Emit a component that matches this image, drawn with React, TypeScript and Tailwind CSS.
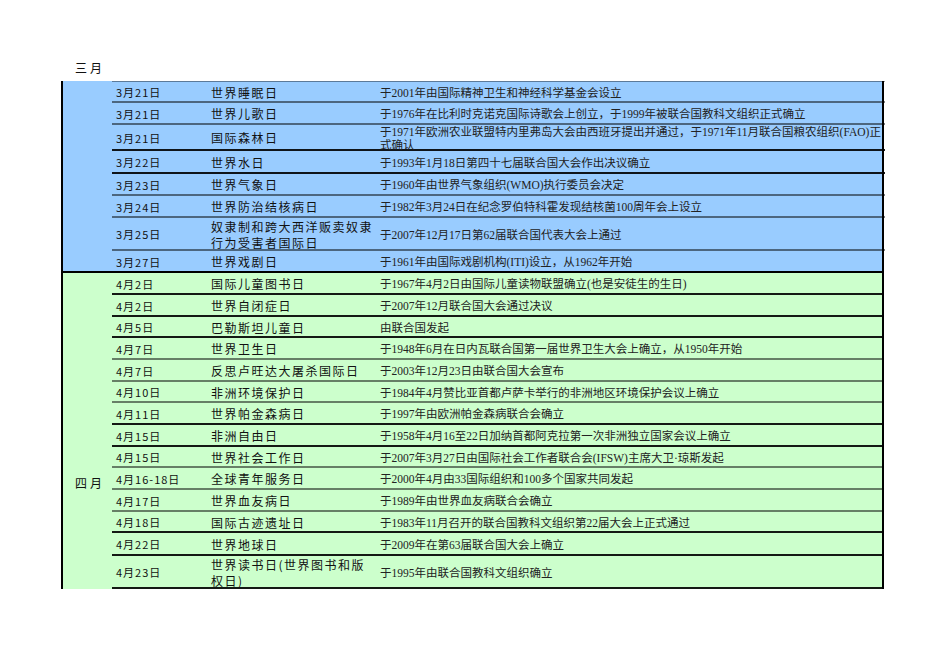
import React from "react";

type Row = {
  date: string;
  name: React.ReactNode;
  desc: React.ReactNode;
  h: string;
  dark?: boolean;
};

const marchRows: Row[] = [
  { date: "3月21日", name: "世界睡眠日", desc: "于2001年由国际精神卫生和神经科学基金会设立", h: "h-[21px]" },
  { date: "3月21日", name: "世界儿歌日", desc: "于1976年在比利时克诺克国际诗歌会上创立，于1999年被联合国教科文组织正式确立", h: "h-[22px]" },
  {
    date: "3月21日",
    name: "国际森林日",
    desc: (
      <>
        <span className="whitespace-nowrap">于1971年欧洲农业联盟特内里弗岛大会由西班牙提出并通过，于1971年11月联合国粮农组织(FAO)正</span>
        <br />
        式确认
      </>
    ),
    h: "h-[26px]",
    dark: true,
  },
  { date: "3月22日", name: "世界水日", desc: "于1993年1月18日第四十七届联合国大会作出决议确立", h: "h-[23px]", dark: true },
  { date: "3月23日", name: "世界气象日", desc: "于1960年由世界气象组织(WMO)执行委员会决定", h: "h-[22px]" },
  { date: "3月24日", name: "世界防治结核病日", desc: "于1982年3月24日在纪念罗伯特科霍发现结核菌100周年会上设立", h: "h-[22px]" },
  { date: "3月25日", name: "奴隶制和跨大西洋贩卖奴隶行为受害者国际日", desc: "于2007年12月17日第62届联合国代表大会上通过", h: "h-[33px]" },
  { date: "3月27日", name: "世界戏剧日", desc: "于1961年由国际戏剧机构(ITI)设立，从1962年开始", h: "h-[20px]" },
];

const aprilRows: Row[] = [
  { date: "4月2日", name: "国际儿童图书日", desc: "于1967年4月2日由国际儿童读物联盟确立(也是安徒生的生日)", h: "h-[22px]", dark: true },
  { date: "4月2日", name: "世界自闭症日", desc: "于2007年12月联合国大会通过决议", h: "h-[22px]", dark: true },
  { date: "4月5日", name: "巴勒斯坦儿童日", desc: "由联合国发起", h: "h-[21px]", dark: true },
  { date: "4月7日", name: "世界卫生日", desc: "于1948年6月在日内瓦联合国第一届世界卫生大会上确立，从1950年开始", h: "h-[22px]" },
  { date: "4月7日", name: "反思卢旺达大屠杀国际日", desc: "于2003年12月23日由联合国大会宣布", h: "h-[22px]" },
  { date: "4月10日", name: "非洲环境保护日", desc: "于1984年4月赞比亚首都卢萨卡举行的非洲地区环境保护会议上确立", h: "h-[21px]" },
  { date: "4月11日", name: "世界帕金森病日", desc: "于1997年由欧洲帕金森病联合会确立", h: "h-[22px]", dark: true },
  { date: "4月15日", name: "非洲自由日", desc: "于1958年4月16至22日加纳首都阿克拉第一次非洲独立国家会议上确立", h: "h-[22px]", dark: true },
  { date: "4月15日", name: "世界社会工作日", desc: "于2007年3月27日由国际社会工作者联合会(IFSW)主席大卫·琼斯发起", h: "h-[21px]" },
  { date: "4月16-18日", name: "全球青年服务日", desc: "于2000年4月由33国际组织和100多个国家共同发起", h: "h-[22px]" },
  { date: "4月17日", name: "世界血友病日", desc: "于1989年由世界血友病联合会确立", h: "h-[22px]" },
  { date: "4月18日", name: "国际古迹遗址日", desc: "于1983年11月召开的联合国教科文组织第22届大会上正式通过", h: "h-[21px]", dark: true },
  { date: "4月22日", name: "世界地球日", desc: "于2009年在第63届联合国大会上确立", h: "h-[23px]", dark: true },
  { date: "4月23日", name: "世界读书日(世界图书和版权日)", desc: "于1995年由联合国教科文组织确立", h: "h-[33px]", dark: true },
];

const cjk = "font-['Noto_Sans_CJK_SC',sans-serif]";
const serif = "font-['Liberation_Serif','Noto_Sans_CJK_SC',serif]";

function TableRow({ row, last }: { row: Row; last?: boolean }) {
  const border = last ? "" : row.dark ? "border-b-2 border-black/90" : "border-b-2 border-black/50";
  return (
    <div className={`flex items-center ${row.h} ${border}`}>
      <div className={`w-[93px] shrink-0 pl-[4px] pt-[2px] text-[11px] tracking-[1px] text-[#111] ${cjk}`}>{row.date}</div>
      <div className={`w-[170px] shrink-0 pl-[6px] pr-[2px] pt-[2px] text-[12px] leading-[16px] tracking-[1.5px] text-[#111] ${cjk}`}>
        {row.name}
      </div>
      <div className={`flex-1 min-w-0 pl-[5px] pr-[4px] pt-[3px] text-[11.5px] leading-[13px] text-[#222] ${serif}`}>{row.desc}</div>
    </div>
  );
}

export default function App() {
  return (
    <div className="w-[950px] h-[672px] bg-white">
      <div className={`pt-[61px] pl-[75px] h-[81px] text-[12px] leading-[14px] tracking-[3px] text-[#111] ${cjk}`}>三月</div>
      <div className="ml-[61px] w-[823px] border-x-2 border-black">
        {/* March */}
        <div className="flex bg-[#99ccff] border-b-2 border-black">
          <div className="w-[49px] shrink-0" />
          <div className="flex-1 border-t border-black/40">
            {marchRows.map((r, i) => (
              <TableRow key={i} row={r} last={i === marchRows.length - 1} />
            ))}
          </div>
        </div>
        {/* April */}
        <div className="flex bg-[#ccffcc]">
          <div className={`w-[49px] shrink-0 pt-[203px] pl-[12px] text-[12px] leading-[14px] tracking-[3px] text-[#111] ${cjk}`}>
            四月
          </div>
          <div className="flex-1">
            {aprilRows.map((r, i) => (
              <TableRow key={i} row={r} />
            ))}
          </div>
        </div>
      </div>
    </div>
  );
}
